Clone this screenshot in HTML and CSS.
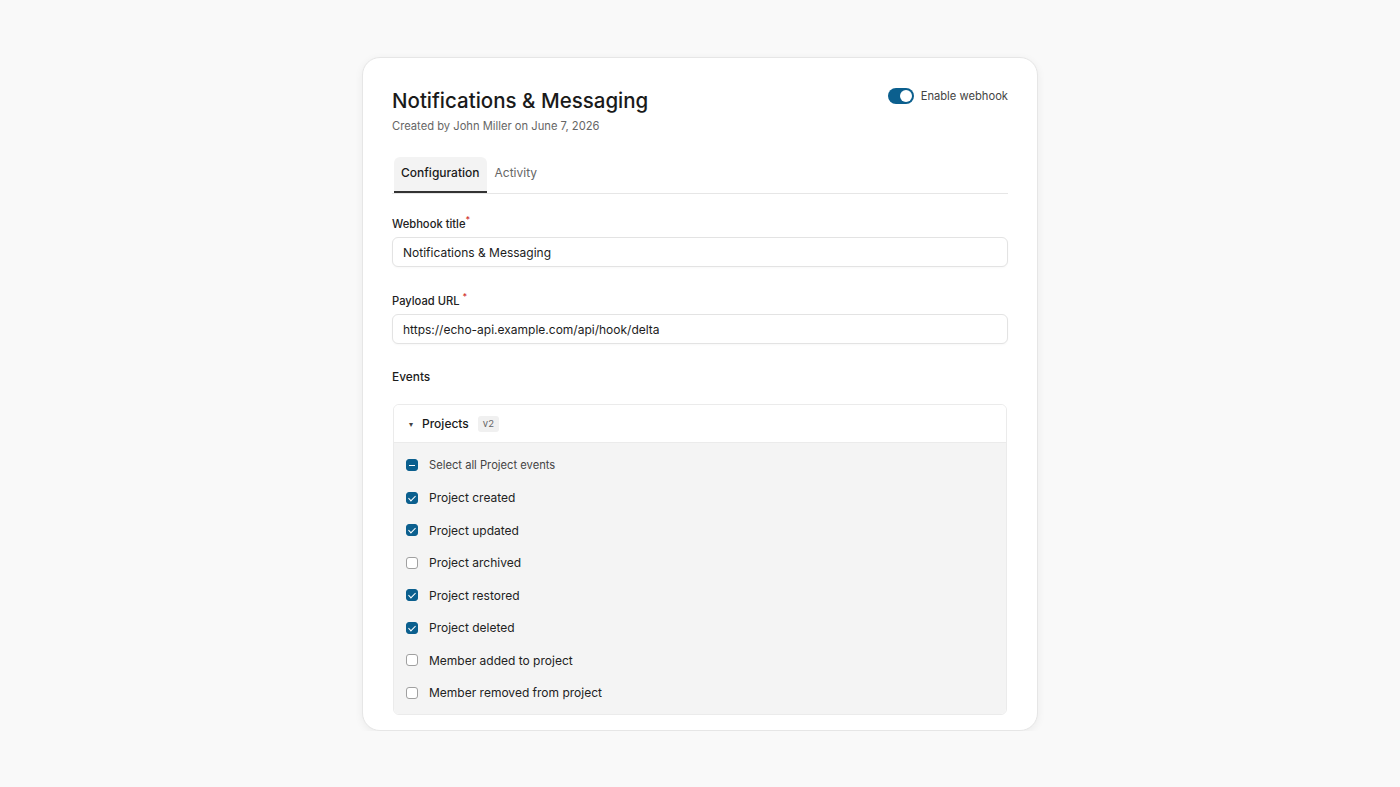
FILE: index.html
```html
<!DOCTYPE html>
<html lang="en">

<head>
    <meta charset="UTF-8">
    <meta name="viewport" content="width=device-width, initial-scale=1.0">
    <title>Webhook - Notifications &amp; Messaging</title>
    <link rel="stylesheet" href="styles.css">
</head>

<body>
    <div class="card">
        <!-- Header -->
        <div class="header">
            <div>
                <h1>Notifications &amp; Messaging</h1>
                <p class="meta">Created by John Miller on June 7, 2026</p>
            </div>
            <label class="switch">
                <span class="track"><span class="knob"></span></span>
                Enable webhook
            </label>
        </div>

        <!-- Tabs -->
        <div class="tabs">
            <span class="tab active">Configuration</span>
            <span class="tab">Activity</span>
        </div>

        <!-- Form -->
        <div class="field">
            <label for="title">Webhook title<sup>*</sup></label>
            <input type="text" id="title" value="Notifications &amp; Messaging" />
        </div>

        <div class="field">
            <label for="url">Payload URL <sup>*</sup></label>
            <input type="text" id="url" value="https://echo-api.example.com/api/hook/delta" />
        </div>

        <div class="section-title">Events</div>

        <div class="events">
            <div class="events-head">
                <span class="caret">&#9662;</span>
                <span class="group-name">Projects</span>
                <span class="badge">v2</span>
            </div>
            <div class="events-body">
                <div class="row all"><span class="box partial"></span>Select all Project events</div>
                <div class="row"><span class="box checked"></span>Project created</div>
                <div class="row"><span class="box checked"></span>Project updated</div>
                <div class="row"><span class="box"></span>Project archived</div>
                <div class="row"><span class="box checked"></span>Project restored</div>
                <div class="row"><span class="box checked"></span>Project deleted</div>
                <div class="row"><span class="box"></span>Member added to project</div>
                <div class="row"><span class="box"></span>Member removed from project</div>
            </div>
        </div>
    </div>
</body>

</html>
```

FILE: styles.css
```css
body {
    font-family: Inter, "Noto Sans", sans-serif;
    margin: 0;
    background-color: #f9f9f9;
    color: #1c1c1c;
}

.card {
    box-sizing: border-box;
    width: 676px;
    margin: 57px auto 0;
    padding: 28px 29px 15px;
    background-color: #fff;
    border: 1px solid #e6e6e6;
    border-radius: 18px;
    box-shadow: 0 2px 8px rgba(0, 0, 0, 0.06);
}

.header {
    display: flex;
    justify-content: space-between;
    align-items: flex-start;
}

h1 {
    margin: 1px 0 0;
    font-size: 20.5px;
    font-weight: 450;
    line-height: 28px;
    color: #1a1a1a;
}

.meta {
    margin: 2px 0 0;
    font-size: 11.2px;
    line-height: 18px;
    color: #666;
}

.switch {
    display: flex;
    align-items: center;
    gap: 7px;
    margin-top: 2px;
    font-size: 11.2px;
    color: #444;
}

.track {
    display: flex;
    justify-content: flex-end;
    align-items: center;
    width: 26px;
    height: 16px;
    padding: 2px;
    box-sizing: border-box;
    border-radius: 8px;
    background-color: #0b5f8e;
}

.knob {
    width: 12px;
    height: 12px;
    border-radius: 50%;
    background-color: #fff;
}

.tabs {
    display: flex;
    margin-top: 22px;
    padding-left: 2px;
    border-bottom: 1px solid #e6e6e6;
}

.tab {
    padding: 7px 8px 10px;
    font-size: 12px;
    line-height: 17px;
    color: #666;
    border-bottom: 2px solid transparent;
    border-radius: 6px 6px 0 0;
}

.tab.active {
    padding: 7px 7px 10px;
    color: #1a1a1a;
    font-weight: 500;
    background-color: #f3f3f3;
    border-bottom-color: #333;
}

.field {
    margin-top: 22px;
}

.field + .field {
    margin-top: 26px;
}

.field label {
    display: block;
    margin-bottom: 5px;
    font-size: 11.2px;
    font-weight: 500;
    line-height: 16px;
    color: #222;
}

sup {
    color: #d03030;
    font-size: 9px;
    vertical-align: 5px;
    line-height: 0;
}

.field input {
    box-sizing: border-box;
    width: 100%;
    height: 30px;
    padding: 0 10px;
    font-family: inherit;
    font-size: 12px;
    color: #1c1c1c;
    border: 1px solid #e3e3e3;
    border-radius: 6px;
    box-shadow: 0 1px 2px rgba(0, 0, 0, 0.03);
}

.section-title {
    margin-top: 25px;
    font-size: 11.9px;
    font-weight: 500;
    line-height: 16px;
}

.events {
    margin-top: 19px;
    margin-left: 1px;
    margin-right: 1px;
    border: 1px solid #ebebeb;
    border-radius: 6px;
    overflow: hidden;
}

.events-head {
    display: flex;
    align-items: center;
    height: 37px;
    padding-left: 15px;
    background-color: #fff;
    border-bottom: 1px solid #ebebeb;
}

.caret {
    font-size: 8px;
    color: #444;
    margin-right: 9px;
}

.group-name {
    font-size: 12px;
    font-weight: 500;
    color: #1a1a1a;
}

.badge {
    margin-left: 9px;
    padding: 2px 5px;
    font-size: 9.5px;
    line-height: 12px;
    color: #666;
    background-color: #f0f0f0;
    border-radius: 3px;
}

.events-body {
    padding: 6px 0 5px 12px;
    background-color: #f4f4f4;
}

.row {
    display: flex;
    align-items: center;
    gap: 11px;
    height: 32.5px;
    font-size: 12px;
    color: #222;
}

.row.all {
    font-size: 11.2px;
    color: #444;
}

.box {
    position: relative;
    box-sizing: border-box;
    width: 12px;
    height: 12px;
    border: 1px solid #a0a0a0;
    border-radius: 3px;
    background-color: #fff;
}

.box.checked,
.box.partial {
    border-color: #0b5f8e;
    background-color: #0b5f8e;
}

.box.checked::after {
    content: "";
    position: absolute;
    left: 3px;
    top: 1px;
    width: 3px;
    height: 6px;
    border: solid #fff;
    border-width: 0 1.5px 1.5px 0;
    transform: rotate(45deg);
}

.box.partial::after {
    content: "";
    position: absolute;
    left: 2px;
    top: 4.5px;
    width: 6px;
    height: 1.2px;
    background-color: #fff;
}
```
